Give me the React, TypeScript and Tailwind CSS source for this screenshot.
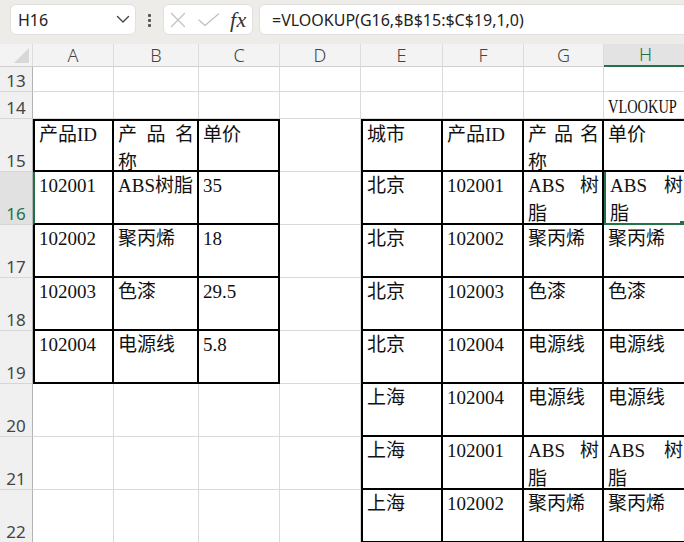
import React from 'react';

type Wrapped = { lines: string[][] };
type CellValue = string | Wrapped | null;

const wrap = (...lines: string[][]): Wrapped => ({ lines });

const COLS = ['A', 'B', 'C', 'D', 'E', 'F', 'G', 'H'];
const ROWS = [13, 14, 15, 16, 17, 18, 19, 20, 21, 22];

const ABS = () => wrap(['ABS', '树'], ['脂']);
const NAME = () => wrap(['产', '品', '名'], ['称']);

const DATA: Record<number, CellValue[]> = {
  13: [null, null, null, null, null, null, null, null],
  14: [null, null, null, null, null, null, null, 'VLOOKUP'],
  15: ['产品ID', NAME(), '单价', null, '城市', '产品ID', NAME(), '单价'],
  16: ['102001', 'ABS树脂', '35', null, '北京', '102001', ABS(), ABS()],
  17: ['102002', '聚丙烯', '18', null, '北京', '102002', '聚丙烯', '聚丙烯'],
  18: ['102003', '色漆', '29.5', null, '北京', '102003', '色漆', '色漆'],
  19: ['102004', '电源线', '5.8', null, '北京', '102004', '电源线', '电源线'],
  20: [null, null, null, null, '上海', '102004', '电源线', '电源线'],
  21: [null, null, null, null, '上海', '102001', ABS(), ABS()],
  22: [null, null, null, null, '上海', '102002', '聚丙烯', '聚丙烯'],
};

const inLeftTable = (r: number, c: number) => r >= 15 && r <= 19 && c <= 2;
const inRightTable = (r: number, c: number) => r >= 15 && c >= 4;

function cellClass(r: number, c: number): string {
  const parts: string[] = ['relative overflow-hidden pl-[4px] pr-[3px]'];
  const left = inLeftTable(r, c);
  const right = inRightTable(r, c);
  if (left || right) {
    parts.push('border-r-2 border-b-2 border-black');
    if (r === 15) parts.push('border-t-2');
    if ((left && c === 0) || (right && c === 4)) parts.push('border-l-2');
    if (r === 16 && c === 0) parts.push('border-l-[#217346]');
    if (r === 16 && c === 7) parts.push('border-l-2 border-l-[#217346] border-b-[#217346]');
  } else {
    parts.push('border-r border-b border-[#dadada]');
  }
  return parts.join(' ');
}

function CellBody({ value }: { value: CellValue }) {
  if (value === null) return null;
  if (value === 'VLOOKUP') {
    // narrow serif caption, bottom-aligned like a default cell
    return (
      <div className="absolute inset-0 flex items-end pl-[4px] pb-[1px]">
        <span className="inline-block origin-left scale-x-[0.8] font-['Liberation_Serif',serif] text-[18px] leading-[20px] text-[#111] whitespace-nowrap">
          {value}
        </span>
      </div>
    );
  }
  if (typeof value === 'string') {
    return <div className="whitespace-nowrap">{value}</div>;
  }
  return (
    <div>
      {value.lines.map((line, i) => (
        <div key={i} className={line.length > 1 ? 'flex justify-between' : 'flex'}>
          {line.map((t, j) => (
            <span key={j}>{t}</span>
          ))}
        </div>
      ))}
    </div>
  );
}

function NameBox() {
  return (
    <div className="w-[126px] h-[31px] shrink-0 bg-white rounded-[6px] border border-[#e2e0dc] flex items-center justify-between pl-[7px] pr-[5px]">
      <span className="text-[16px] text-[#222] leading-none">H16</span>
      <svg width="14" height="9" viewBox="0 0 14 9">
        <polyline points="1.5,1.5 7,7 12.5,1.5" fill="none" stroke="#444" strokeWidth="1.4" strokeLinecap="round" strokeLinejoin="round" />
      </svg>
    </div>
  );
}

function FunctionButtons() {
  return (
    <div className="w-[90px] h-[31px] shrink-0 bg-white rounded-[6px] border border-[#e2e0dc] flex items-center pl-[6px]">
      <svg width="16" height="16" viewBox="0 0 16 16" className="shrink-0">
        <path d="M1.5 1.5 L14.5 14.5 M14.5 1.5 L1.5 14.5" stroke="#c2c2c2" strokeWidth="1.3" strokeLinecap="round" />
      </svg>
      <svg width="22" height="14" viewBox="0 0 22 14" className="ml-[12px] shrink-0">
        <polyline points="1,7 7,12.5 20.5,1" fill="none" stroke="#c2c2c2" strokeWidth="1.3" strokeLinecap="round" strokeLinejoin="round" />
      </svg>
      <span className="ml-[10px] font-['Liberation_Serif',serif] italic text-[22px] leading-none text-[#333] tracking-[0.5px]">
        fx
      </span>
    </div>
  );
}

export default function App() {
  return (
    <div className="w-[684px] h-[542px] overflow-hidden bg-white font-['Noto_Sans',sans-serif]">
      {/* formula bar */}
      <div className="h-[44px] bg-[#eeece9] flex items-start pt-[4px] pl-[10px] overflow-hidden">
        <NameBox />
        <div className="w-[27px] shrink-0 flex flex-col items-center gap-[2px] pt-[10px]">
          <div className="w-[3px] h-[3px] bg-[#555] rounded-[1px]" />
          <div className="w-[3px] h-[3px] bg-[#555] rounded-[1px]" />
          <div className="w-[3px] h-[3px] bg-[#555] rounded-[1px]" />
        </div>
        <FunctionButtons />
        <div className="ml-[6px] w-[440px] h-[31px] shrink-0 bg-white rounded-[6px] border border-[#e2e0dc] flex items-center pl-[12px]">
          <span className="text-[16px] text-[#222] leading-none">=VLOOKUP(G16,$B$15:$C$19,1,0)</span>
        </div>
      </div>

      {/* worksheet grid */}
      <div className="grid w-[688px] grid-cols-[33px_81px_85px_81px_81px_82px_81px_80px_84px] grid-rows-[23px_25px_27px_repeat(8,53px)]">
        {/* select-all corner */}
        <div className="bg-[#f3f3f3] border-r border-b border-r-[#dcdcdc] border-b-[#cfcfcf] relative">
          <svg width="33" height="23" viewBox="0 0 33 23" className="absolute inset-0">
            <polygon points="29,4 29,19 14,19" fill="#d8d8d8" />
          </svg>
        </div>
        {COLS.map((col) =>
          col === 'H' ? (
            <div key={col} className="flex items-center justify-center bg-[#e3e3e3] border-r border-r-[#dcdcdc] border-b-2 border-b-[#217346] text-[18px] font-light text-[#217346]">
              {col}
            </div>
          ) : (
            <div key={col} className="flex items-center justify-center bg-[#f3f3f3] border-r border-b border-r-[#dcdcdc] border-b-[#cfcfcf] text-[18px] font-light text-[#444]">
              {col}
            </div>
          )
        )}

        {ROWS.map((r) => (
          <React.Fragment key={r}>
            {r === 16 ? (
              <div className="flex items-end justify-center pb-[2px] bg-[#e1e1e1] border-r border-b border-r-[#b4b4b4] border-b-[#d6d6d6] text-[17px] leading-none text-[#217346]">
                {r}
              </div>
            ) : (
              <div className="flex items-end justify-center pb-[2px] bg-[#f0f0f0] border-r border-b border-r-[#b4b4b4] border-b-[#d6d6d6] text-[17px] leading-none text-[#444]">
                {r}
              </div>
            )}
            {DATA[r].map((v, c) => (
              <div
                key={c}
                className={`${cellClass(r, c)} font-['Liberation_Serif','Noto_Sans_CJK_SC',serif] text-[19px] leading-[28px] text-[#111]`}
              >
                <CellBody value={v} />
                {r === 16 && c === 7 && (
                  <div className="absolute right-[1px] bottom-[-3px] w-[6px] h-[6px] bg-[#217346] border border-white" />
                )}
              </div>
            ))}
          </React.Fragment>
        ))}
      </div>
    </div>
  );
}
